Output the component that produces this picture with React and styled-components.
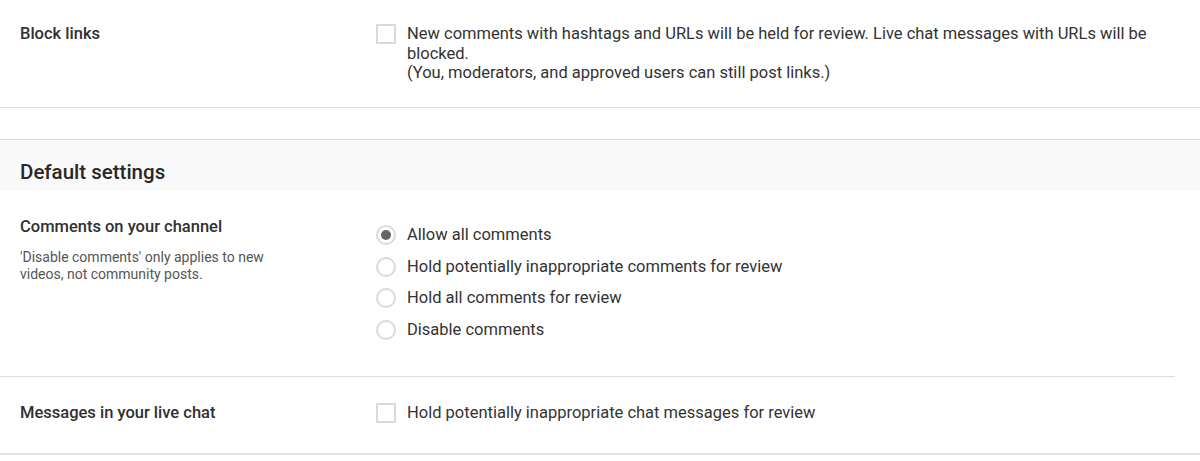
import React from "react";
import styled, { createGlobalStyle } from "styled-components";

const Global = createGlobalStyle`
  html, body { margin: 0; padding: 0; background: #fff; }
  body { font-family: Roboto, "Noto Sans", Arial, sans-serif; color: #282828; }
  * { box-sizing: border-box; }
`;

const Page = styled.div`
  width: 1200px;
  height: 461px;
  overflow: hidden;
  background: #fff;
`;

const Section = styled.section`
  border-bottom: ${(p) => (p.$thick ? "2px solid #e3e3e3" : "1px solid #dcdcdc")};
`;

const Row = styled.div`
  display: grid;
  grid-template-columns: 356px 1fr;
  padding: ${(p) => p.$pad || "24px 0 0 20px"};
  margin-right: ${(p) => p.$mr || "0"};
  min-height: ${(p) => p.$h || "auto"};
  border-bottom: ${(p) => (p.$divider ? "1px solid #dcdcdc" : "none")};
`;

const LabelCol = styled.div`
  display: flex;
  flex-direction: column;
  gap: 12px;
`;

const Label = styled.div`
  font-size: 16.5px;
  font-weight: 500;
  line-height: 20px;
  color: #303030;
`;

const Hint = styled.div`
  font-size: 14px;
  line-height: 17px;
  color: #555;
  max-width: 262px;
`;

const Spacer = styled.div`
  height: 32px;
  border-bottom: 1px solid #dcdcdc;
`;

const Header = styled.div`
  background: #f9f9f9;
  height: 51px;
  padding: 20px 0 0 20px;
  font-size: 20.5px;
  font-weight: 500;
  line-height: 24px;
  color: #282828;
`;

const Option = styled.label`
  display: flex;
  align-items: flex-start;
  gap: 11px;
  font-size: 16.5px;
  line-height: 19.5px;
  color: #333;
  padding-right: 50px;
`;

const Box = styled.span`
  flex: none;
  width: 20px;
  height: 20px;
  border: 2px solid #dadada;
  border-radius: ${(p) => (p.$round ? "50%" : "1px")};
  display: flex;
  align-items: center;
  justify-content: center;
  &::after {
    content: "";
    display: ${(p) => (p.$checked ? "block" : "none")};
    width: 10px;
    height: 10px;
    border-radius: 50%;
    background: #666;
  }
`;

const Radios = styled.div`
  display: flex;
  flex-direction: column;
  gap: 11.7px;
  padding-top: 8px;
`;

export default function App() {
  const radios = [
    "Allow all comments",
    "Hold potentially inappropriate comments for review",
    "Hold all comments for review",
    "Disable comments",
  ];
  return (
    <Page>
      <Global />
      <Section>
        <Row $pad="24px 0 0 20px" $h="107px">
          <LabelCol>
            <Label>Block links</Label>
          </LabelCol>
          <Option>
            <Box />
            <span>
              New comments with hashtags and URLs will be held for review. Live chat messages with URLs will be blocked.
              <br />
              (You, moderators, and approved users can still post links.)
            </span>
          </Option>
        </Row>
      </Section>
      <Spacer />
      <Section $thick>
        <Header>Default settings</Header>
        <Row $pad="26px 0 0 20px" $mr="25px" $h="186px" $divider>
          <LabelCol>
            <Label>Comments on your channel</Label>
            <Hint>'Disable comments' only applies to new videos, not community posts.</Hint>
          </LabelCol>
          <Radios>
            {radios.map((r, i) => (
              <Option key={r}>
                <Box $round $checked={i === 0} />
                <span>{r}</span>
              </Option>
            ))}
          </Radios>
        </Row>
        <Row $pad="26px 0 0 20px" $h="76px">
          <LabelCol>
            <Label>Messages in your live chat</Label>
          </LabelCol>
          <Option>
            <Box />
            <span>Hold potentially inappropriate chat messages for review</span>
          </Option>
        </Row>
      </Section>
    </Page>
  );
}
